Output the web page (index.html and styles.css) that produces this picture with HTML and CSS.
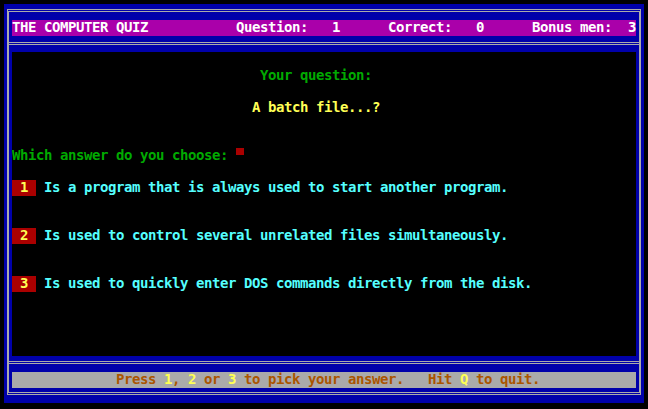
FILE: index.html
```html
<!DOCTYPE html>
<html>
<head>
<meta charset="utf-8">
<link rel="stylesheet" href="styles.css">
</head>
<body>
<div class="screen">
  <div class="frame">
    <div class="titlebar line">THE COMPUTER QUIZ           Question:   1      Correct:   0      Bonus men:  3</div>
    <div class="divider top-divider"></div>
    <div class="main">
      <div class="line prompt">Your question:</div>
      <div class="line question">A batch file...?</div>
      <div class="line choose">Which answer do you choose:<span class="cursor"></span></div>
      <div class="line answer first"><span class="key">1</span><span class="text">Is a program that is always used to start another program.</span></div>
      <div class="line answer"><span class="key">2</span><span class="text">Is used to control several unrelated files simultaneously.</span></div>
      <div class="line answer"><span class="key">3</span><span class="text">Is used to quickly enter DOS commands directly from the disk.</span></div>
    </div>
    <div class="divider bottom-divider"></div>
    <div class="status line">Press <span class="hot">1</span>, <span class="hot">2</span> or <span class="hot">3</span> to pick your answer.   Hit <span class="hot">Q</span> to quit.</div>
  </div>
</div>
</body>
</html>
```
FILE: styles.css
```css
html, body {
  margin: 0;
  padding: 0;
}
body {
  width: 648px;
  height: 409px;
  overflow: hidden;
  background: #000;
  font-family: "DejaVu Sans Mono", "Liberation Mono", monospace;
  font-weight: bold;
  font-size: 14px;
  letter-spacing: -0.43px;
}
.screen {
  box-sizing: border-box;
  margin: 4px 0 0 4px;
  width: 640px;
  height: 399px;
  background: #0000aa;
  padding-top: 5px;
}
.frame {
  margin: 0 3px;
  border-left: 2px solid #aaaaaa;
  border-right: 2px solid #aaaaaa;
  border-top: 3px double #aaaaaa;
  border-bottom: 3px double #aaaaaa;
  padding-bottom: 4px;
}
.line {
  box-sizing: border-box;
  height: 16px;
  line-height: 14px;
  padding-bottom: 2px;
  white-space: pre;
}
.titlebar {
  margin: 8px 3px 0;
  background: #aa00aa;
  color: #ffffff;
}
.divider {
  border-top: 3px double #aaaaaa;
}
.top-divider {
  margin: 6px 0 7px;
}
.bottom-divider {
  margin: 5px 0 8px;
}
.main {
  margin: 0 3px;
  height: 304px;
  background: #000;
  padding-top: 16px;
  box-sizing: border-box;
}
.prompt {
  color: #00aa00;
  padding-left: 248px;
}
.question {
  color: #ffff55;
  margin-top: 16px;
  padding-left: 240px;
}
.choose {
  color: #00aa00;
  margin-top: 32px;
}
.cursor {
  display: inline-block;
  width: 8px;
  height: 7px;
  margin-left: 8px;
  background: #aa0000;
  vertical-align: top;
}
.answer {
  display: flex;
  gap: 8px;
  margin-top: 32px;
  padding-bottom: 0;
  color: #55ffff;
}
.answer.first {
  margin-top: 16px;
}
.key {
  box-sizing: border-box;
  width: 24px;
  padding-bottom: 2px;
  text-align: center;
  background: #aa0000;
  color: #ffff55;
}
.status {
  margin: 0 3px;
  background: #aaaaaa;
  color: #aa5500;
  padding-left: 104px;
}
.hot {
  color: #ffff55;
}
```
